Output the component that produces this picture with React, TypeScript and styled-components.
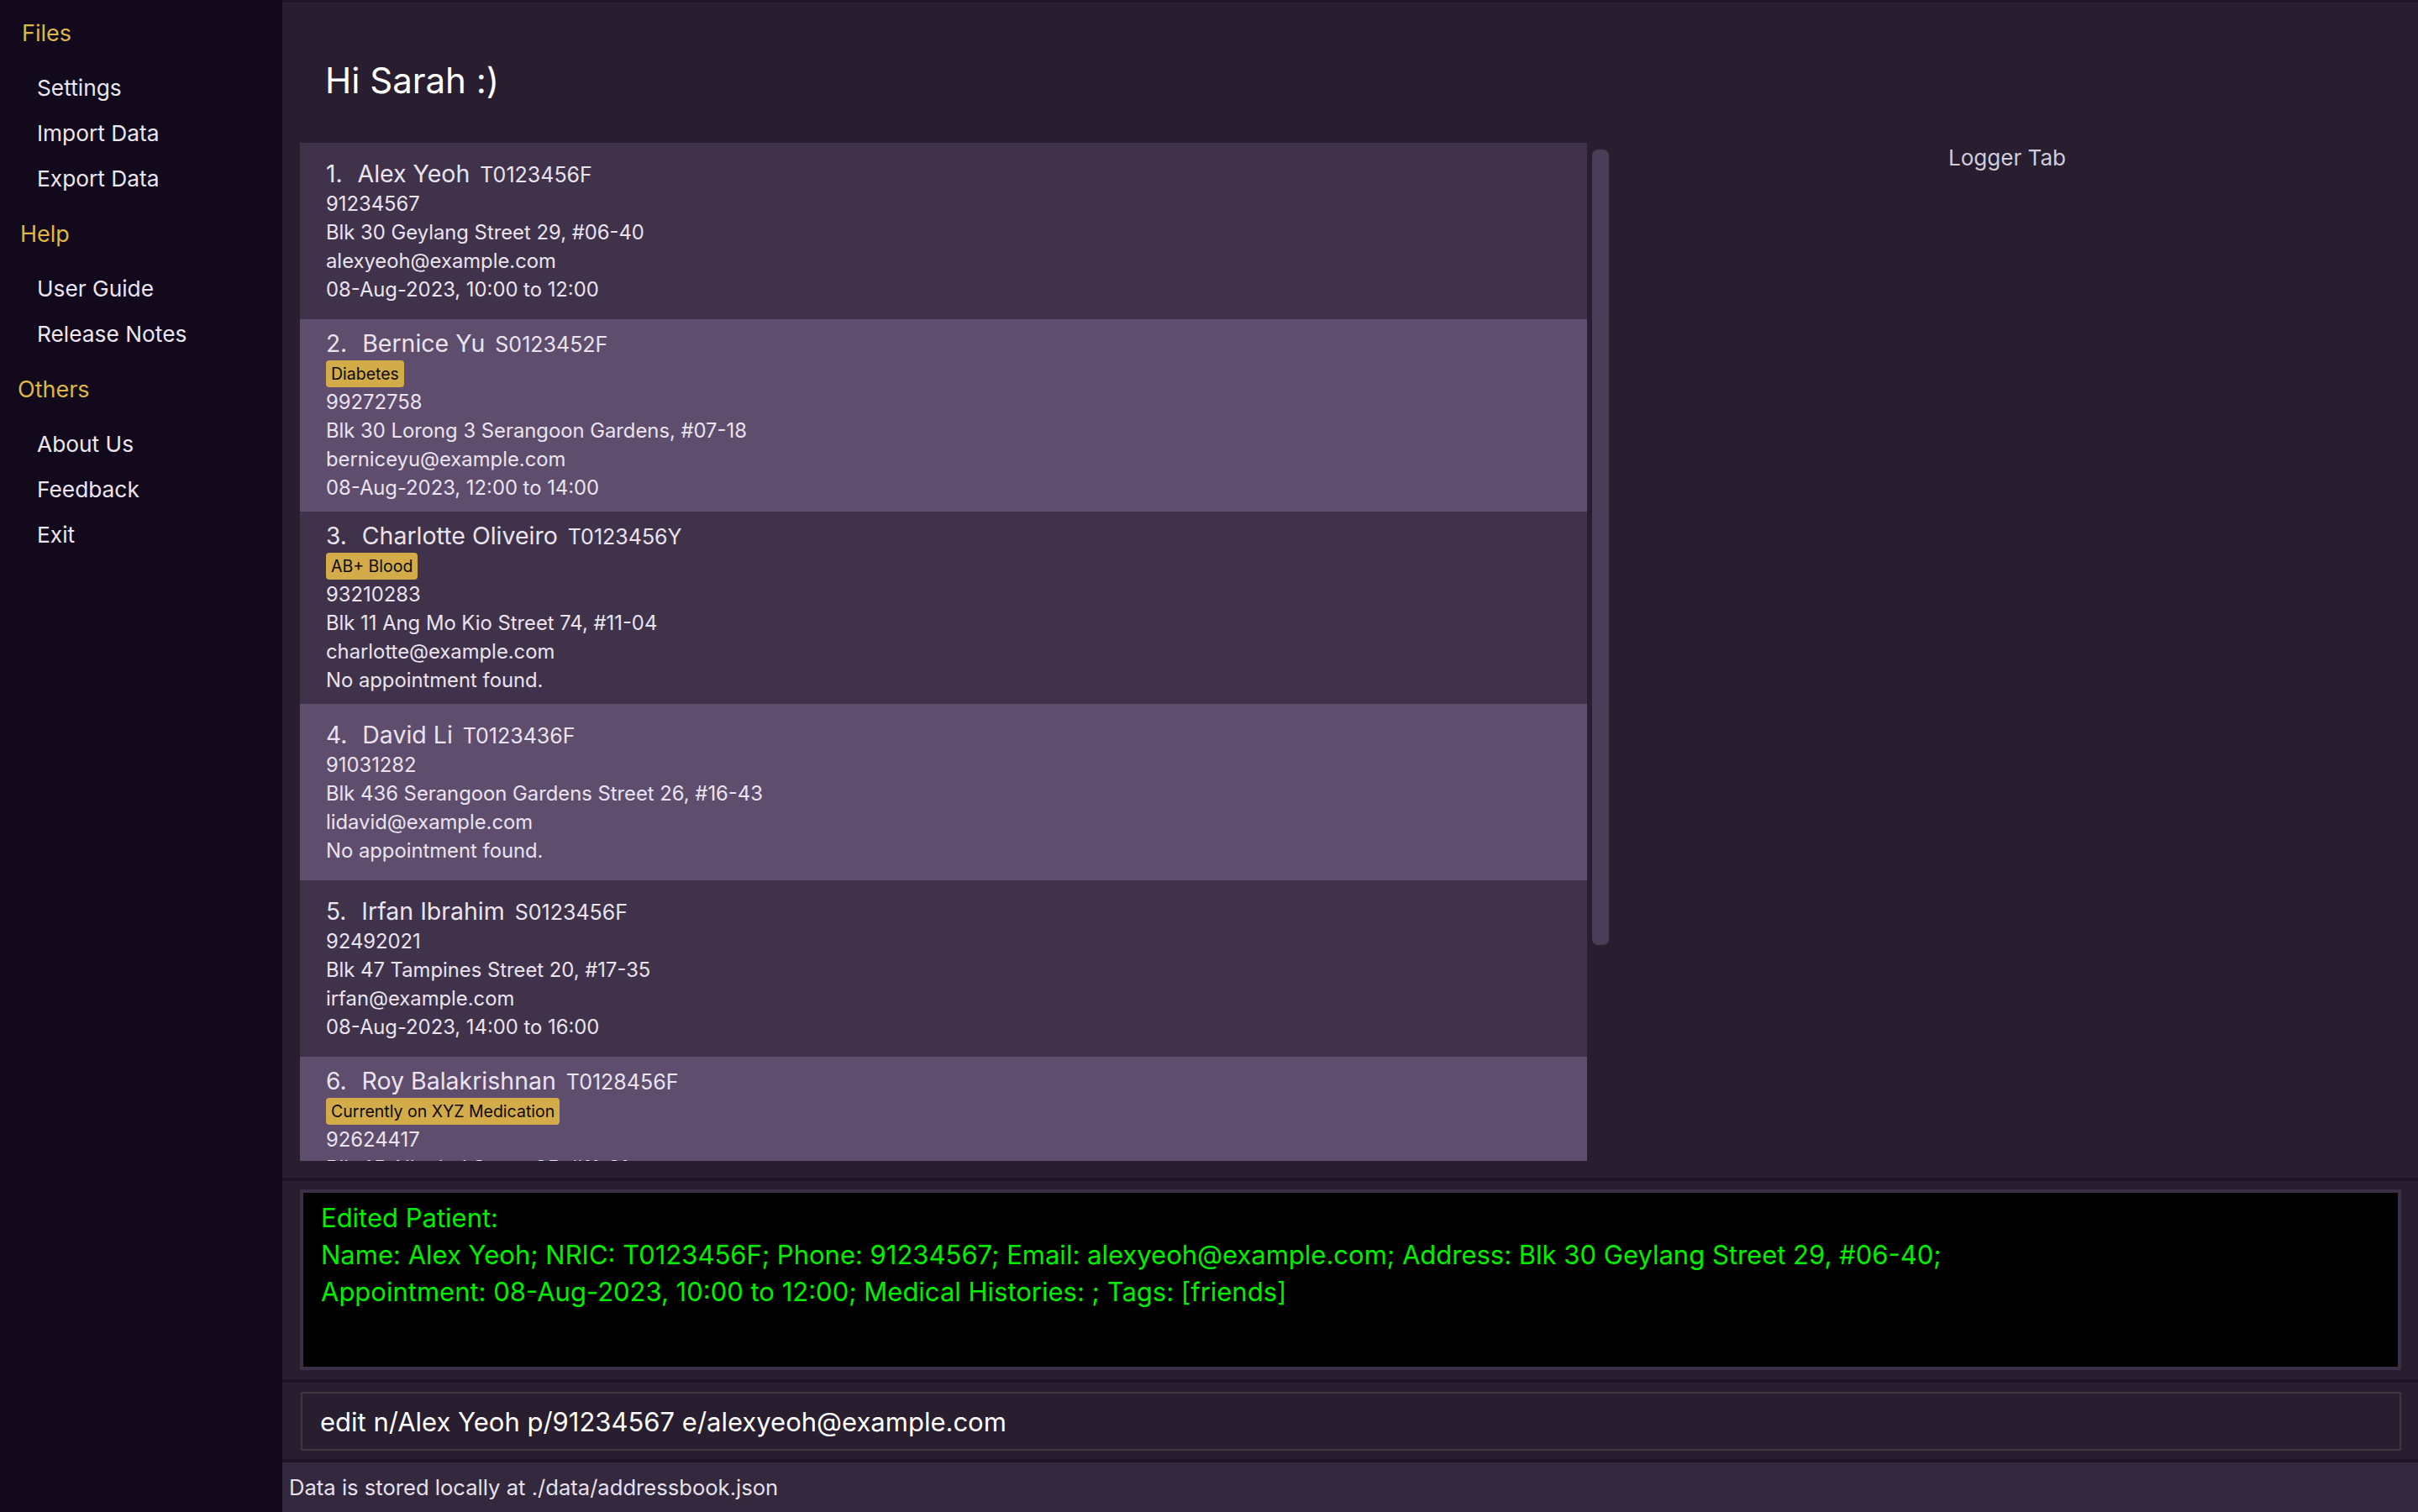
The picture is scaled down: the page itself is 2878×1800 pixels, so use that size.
import React from "react";
import styled, { createGlobalStyle } from "styled-components";

const GlobalStyle = createGlobalStyle`
  html, body { margin: 0; padding: 0; }
  body {
    background: #281e2f;
    font-family: Inter, "Noto Sans", "Liberation Sans", sans-serif;
    -webkit-font-smoothing: antialiased;
  }
  * { box-sizing: border-box; }
`;

const Shell = styled.div`
  display: grid;
  grid-template-columns: 336px 1fr;
  width: 100vw;
  height: 100vh;
  overflow: hidden;
`;

const Sidebar = styled.nav`
  background: #13091d;
  display: flex;
  flex-direction: column;
  padding-top: 13px;
`;

const MenuGroup = styled.div`
  display: flex;
  flex-direction: column;
  & + & { margin-top: 12px; }
`;

const MenuHeader = styled.div<{ $indent: number }>`
  height: 53px;
  line-height: 53px;
  padding-left: ${(p) => p.$indent}px;
  margin-bottom: 12px;
  color: #dfb647;
  font-size: 27px;
`;

const MenuItem = styled.div`
  height: 54px;
  line-height: 54px;
  padding-left: 44px;
  color: #ebe6ef;
  font-size: 26.3px;
`;

const Main = styled.main`
  display: flex;
  flex-direction: column;
  min-width: 0;
  border-top: 3px solid #1e1626;
  background: #281e2f;
`;

const Upper = styled.section`
  flex: 1;
  display: flex;
  min-height: 0;
`;

const ListColumn = styled.div`
  display: flex;
  flex-direction: column;
  padding-left: 21px;
  padding-bottom: 20px;
`;

const Greeting = styled.h1`
  margin: 0;
  height: 167px;
  padding: 18px 0 0 30px;
  display: flex;
  align-items: center;
  color: #ffffff;
  font-size: 42px;
  font-weight: 400;
`;

const ListRow = styled.div`
  display: flex;
  height: 1212px;
`;

const PersonList = styled.div`
  width: 1532px;
  height: 100%;
  overflow: hidden;
  display: flex;
  flex-direction: column;
`;

const ScrollTrack = styled.div`
  width: 20px;
  margin-left: 6px;
  padding-top: 8px;
`;

const Thumb = styled.div`
  height: 947px;
  border-radius: 7px;
  background: #4a3d57;
`;

const Card = styled.div<{ $even: boolean }>`
  flex-shrink: 0;
  min-height: 210px;
  padding: 11px 31px;
  display: flex;
  flex-direction: column;
  justify-content: center;
  background: ${(p) => (p.$even ? "#5f4d6e" : "#40324b")};
  color: #e9e4ee;
`;

const NameRow = styled.div`
  height: 37px;
  display: flex;
  align-items: baseline;
  white-space: nowrap;
`;

const Index = styled.span`
  font-size: 28px;
  margin-right: 18px;
`;

const Name = styled.span`
  font-size: 28.5px;
  margin-right: 12px;
`;

const Nric = styled.span`
  font-size: 25px;
`;

const TagRow = styled.div`
  display: flex;
  gap: 8px;
  margin-top: 1px;
  height: 33px;
  align-items: flex-start;
`;

const Tag = styled.span`
  height: 32px;
  line-height: 32px;
  padding: 0 6px;
  border-radius: 4px;
  background: #d3ab48;
  color: #0c0a0a;
  font-size: 19.5px;
`;

const Field = styled.div`
  height: 34px;
  line-height: 34px;
  font-size: 23.8px;
  white-space: nowrap;
`;

const Logger = styled.aside`
  flex: 1;
  padding: 165px 15px 0 0;
  text-align: center;
  color: #d2ccd8;
  font-size: 26px;
  line-height: 40px;
`;

const ResultSection = styled.section`
  border-top: 4px solid #1e1626;
  padding: 10px 20px 11px 21px;
`;

const ResultBox = styled.div`
  height: 215px;
  border: 4px solid #3b2f45;
  background: #000000;
  padding: 8px 21px;
  color: #00f000;
  font-size: 31px;
  line-height: 44px;
`;

const CommandSection = styled.section`
  border-top: 4px solid #1e1626;
  padding: 11px 20px 10px 22px;
`;

const CommandBox = styled.div`
  height: 70px;
  border: 2px solid #3c3a3d;
  padding: 0 21px;
  display: flex;
  align-items: center;
  color: #ffffff;
  font-size: 31px;
`;

const StatusBar = styled.footer`
  height: 63px;
  border-top: 4px solid #1e1626;
  background: #34283e;
  padding-left: 8px;
  display: flex;
  align-items: center;
  color: #e6e1ea;
  font-size: 25.6px;
`;

type Person = {
  name: string;
  nric: string;
  tags: string[];
  phone: string;
  address: string;
  email: string;
  appt: string;
};

const people: Person[] = [
  { name: "Alex Yeoh", nric: "T0123456F", tags: [], phone: "91234567", address: "Blk 30 Geylang Street 29, #06-40", email: "alexyeoh@example.com", appt: "08-Aug-2023, 10:00 to 12:00" },
  { name: "Bernice Yu", nric: "S0123452F", tags: ["Diabetes"], phone: "99272758", address: "Blk 30 Lorong 3 Serangoon Gardens, #07-18", email: "berniceyu@example.com", appt: "08-Aug-2023, 12:00 to 14:00" },
  { name: "Charlotte Oliveiro", nric: "T0123456Y", tags: ["AB+ Blood"], phone: "93210283", address: "Blk 11 Ang Mo Kio Street 74, #11-04", email: "charlotte@example.com", appt: "No appointment found." },
  { name: "David Li", nric: "T0123436F", tags: [], phone: "91031282", address: "Blk 436 Serangoon Gardens Street 26, #16-43", email: "lidavid@example.com", appt: "No appointment found." },
  { name: "Irfan Ibrahim", nric: "S0123456F", tags: [], phone: "92492021", address: "Blk 47 Tampines Street 20, #17-35", email: "irfan@example.com", appt: "08-Aug-2023, 14:00 to 16:00" },
  { name: "Roy Balakrishnan", nric: "T0128456F", tags: ["Currently on XYZ Medication"], phone: "92624417", address: "Blk 45 Aljunied Street 85, #11-31", email: "royb@example.com", appt: "No appointment found." },
];

const menus = [
  { title: "Files", indent: 26, items: ["Settings", "Import Data", "Export Data"] },
  { title: "Help", indent: 24, items: ["User Guide", "Release Notes"] },
  { title: "Others", indent: 21, items: ["About Us", "Feedback", "Exit"] },
];

export default function App() {
  return (
    <>
      <GlobalStyle />
      <Shell>
        <Sidebar>
          {menus.map((m) => (
            <MenuGroup key={m.title}>
              <MenuHeader $indent={m.indent}>{m.title}</MenuHeader>
              {m.items.map((i) => (
                <MenuItem key={i}>{i}</MenuItem>
              ))}
            </MenuGroup>
          ))}
        </Sidebar>
        <Main>
          <Upper>
            <ListColumn>
              <Greeting>Hi Sarah :)</Greeting>
              <ListRow>
                <PersonList>
                  {people.map((p, idx) => (
                    <Card key={p.nric + idx} $even={idx % 2 === 1}>
                      <NameRow>
                        <Index>{idx + 1}.</Index>
                        <Name>{p.name}</Name>
                        <Nric>{p.nric}</Nric>
                      </NameRow>
                      {p.tags.length > 0 && (
                        <TagRow>
                          {p.tags.map((t) => (
                            <Tag key={t}>{t}</Tag>
                          ))}
                        </TagRow>
                      )}
                      <Field>{p.phone}</Field>
                      <Field>{p.address}</Field>
                      <Field>{p.email}</Field>
                      <Field>{p.appt}</Field>
                    </Card>
                  ))}
                </PersonList>
                <ScrollTrack>
                  <Thumb />
                </ScrollTrack>
              </ListRow>
            </ListColumn>
            <Logger>Logger Tab</Logger>
          </Upper>
          <ResultSection>
            <ResultBox>
              Edited Patient:
              <br />
              Name: Alex Yeoh; NRIC: T0123456F; Phone: 91234567; Email: alexyeoh@example.com; Address: Blk 30 Geylang Street 29, #06-40;
              <br />
              Appointment: 08-Aug-2023, 10:00 to 12:00; Medical Histories: ; Tags: [friends]
            </ResultBox>
          </ResultSection>
          <CommandSection>
            <CommandBox>edit n/Alex Yeoh p/91234567 e/alexyeoh@example.com</CommandBox>
          </CommandSection>
          <StatusBar>Data is stored locally at ./data/addressbook.json</StatusBar>
        </Main>
      </Shell>
    </>
  );
}
